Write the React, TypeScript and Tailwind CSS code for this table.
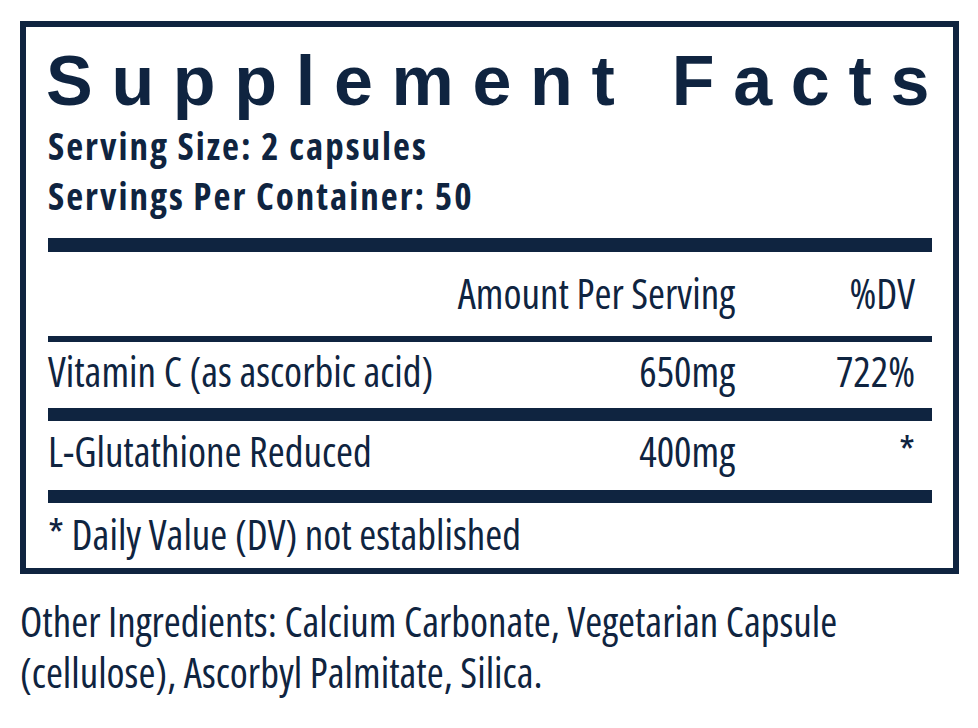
export default function App() {
  return (
    <div className="min-h-screen bg-white pt-[21px] pl-[20px] text-[#0f2440] font-['Open_Sans',sans-serif]">
      <div className="w-[939px] border-[6px] border-[#0f2440] pl-[22px] pr-[21px] pt-[19px]">
        <div className="-ml-[2px] whitespace-nowrap font-['Liberation_Sans',Arial,sans-serif] text-[70px] leading-[70px] font-bold tracking-[18.7px]">
          Supplement Facts
        </div>
        <div className="mt-[5px] text-[37px] leading-[50px] font-bold font-stretch-condensed tracking-[2px]">
          <div>Serving Size: 2 capsules</div>
          <div>Servings Per Container: 50</div>
        </div>
        <div className="mt-[17px] h-[14px] w-full bg-[#0f2440]" />
        <div className="grid grid-cols-[1fr_auto_180px] pr-[17px] pt-[21px] pb-[22px] text-[41px] leading-[41px] font-stretch-condensed">
          <div />
          <div className="text-right">Amount Per Serving</div>
          <div className="text-right">%DV</div>
        </div>
        <div className="h-[6px] w-full bg-[#0f2440]" />
        <div className="grid grid-cols-[1fr_auto_180px] pr-[17px] pt-[9px] pb-[16px] text-[41px] leading-[41px] font-stretch-condensed">
          <div>Vitamin C (as ascorbic acid)</div>
          <div className="text-right">650mg</div>
          <div className="text-right">722%</div>
        </div>
        <div className="h-[13px] w-full bg-[#0f2440]" />
        <div className="grid grid-cols-[1fr_auto_180px] pr-[17px] pt-[10px] pb-[18px] text-[41px] leading-[41px] font-stretch-condensed">
          <div>L-Glutathione Reduced</div>
          <div className="text-right">400mg</div>
          <div className="text-right">*</div>
        </div>
        <div className="h-[13px] w-full bg-[#0f2440]" />
        <div className="pt-[11px] pb-[13px] text-[41px] leading-[41px] font-stretch-condensed">
          * Daily Value (DV) not established
        </div>
      </div>
      <div className="mt-[22px] w-[900px] text-[41px] leading-[51px] font-stretch-condensed">
        Other Ingredients: Calcium Carbonate, Vegetarian Capsule (cellulose), Ascorbyl Palmitate, Silica.
      </div>
    </div>
  );
}
